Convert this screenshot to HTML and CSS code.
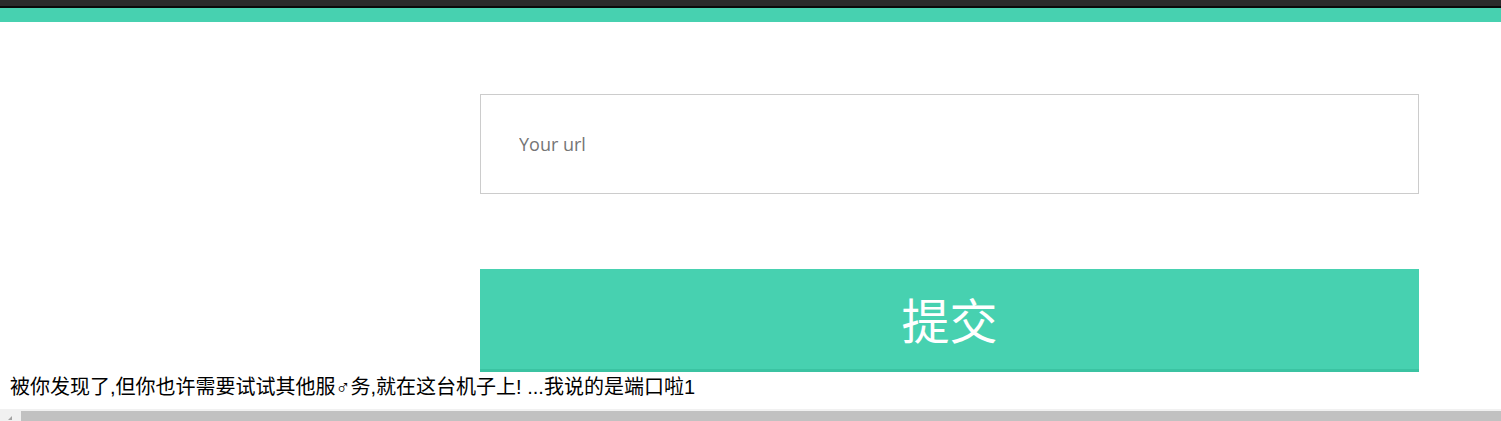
FILE: index.html
```html
<!DOCTYPE html>
<html lang="zh">
<head>
<meta charset="utf-8">
<title>url</title>
<link rel="stylesheet" href="styles.css">
</head>
<body>
<header class="topbar">
  <div class="topbar-dark"></div>
  <div class="topbar-line"></div>
  <div class="topbar-teal"></div>
</header>
<main class="content">
  <form class="form">
    <input class="url-input" type="text" placeholder="Your url">
    <button class="submit" type="button">提交</button>
  </form>
  <p class="hint">被你发现了,但你也许需要试试其他服♂务,就在这台机子上! ...我说的是端口啦1</p>
</main>
<div class="hscroll">
  <div class="hscroll-arrow"></div>
  <div class="hscroll-thumb"></div>
</div>
</body>
</html>
```
FILE: styles.css
```css
html, body {
  margin: 0;
  padding: 0;
  background: #ffffff;
  overflow: hidden;
  height: 421px;
}
body {
  font-family: "Liberation Sans", "Noto Sans CJK SC", sans-serif;
}
.topbar {
  display: flex;
  flex-direction: column;
}
.topbar-dark {
  height: 6px;
  background: #2b2b2b;
}
.topbar-line {
  height: 2px;
  background: #0a0a0a;
}
.topbar-teal {
  height: 14px;
  background: #47d1b0;
}
.content {
  display: flex;
  flex-direction: column;
}
.form {
  display: flex;
  flex-direction: column;
  margin: 72px 0 0 480px;
  width: 939px;
  gap: 75px;
}
.url-input {
  box-sizing: border-box;
  height: 100px;
  width: 100%;
  border: 1px solid #cccccc;
  padding: 0 0 0 38px;
  margin: 0;
  font-family: "Open Sans", "Noto Sans", sans-serif;
  font-size: 18px;
  color: #333;
  outline: none;
  background: #fff;
}
.url-input::placeholder {
  color: #757575;
}
.submit {
  box-sizing: border-box;
  height: 103px;
  width: 100%;
  margin: 0;
  border: none;
  border-bottom: 3px solid #3bc3a2;
  background: #47d1b0;
  color: #ffffff;
  font-family: "Noto Sans CJK SC", sans-serif;
  font-size: 48px;
  line-height: 1;
  padding: 0 0 2px 0;
  cursor: pointer;
}
.hint {
  margin: 4px 0 0 0;
  padding-left: 10px;
  font-size: 20px;
  line-height: 22px;
  color: #000;
  white-space: nowrap;
}
.hint-sym {
  font-size: 14px;
}
.hscroll {
  margin-top: 11px;
  height: 12px;
  background: #f1f1f1;
  display: flex;
  align-items: flex-end;
}
.hscroll-arrow {
  width: 21px;
  height: 12px;
  display: flex;
  align-items: center;
  justify-content: center;
}
.hscroll-arrow::before {
  content: "";
  width: 0;
  height: 0;
  border-top: 4px solid transparent;
  border-right: 4px solid #a3a3a3;
  margin-top: 6px;
  margin-left: -2px;
}
.hscroll-thumb {
  flex: 1;
  height: 10px;
  background: #c1c1c1;
}
```
